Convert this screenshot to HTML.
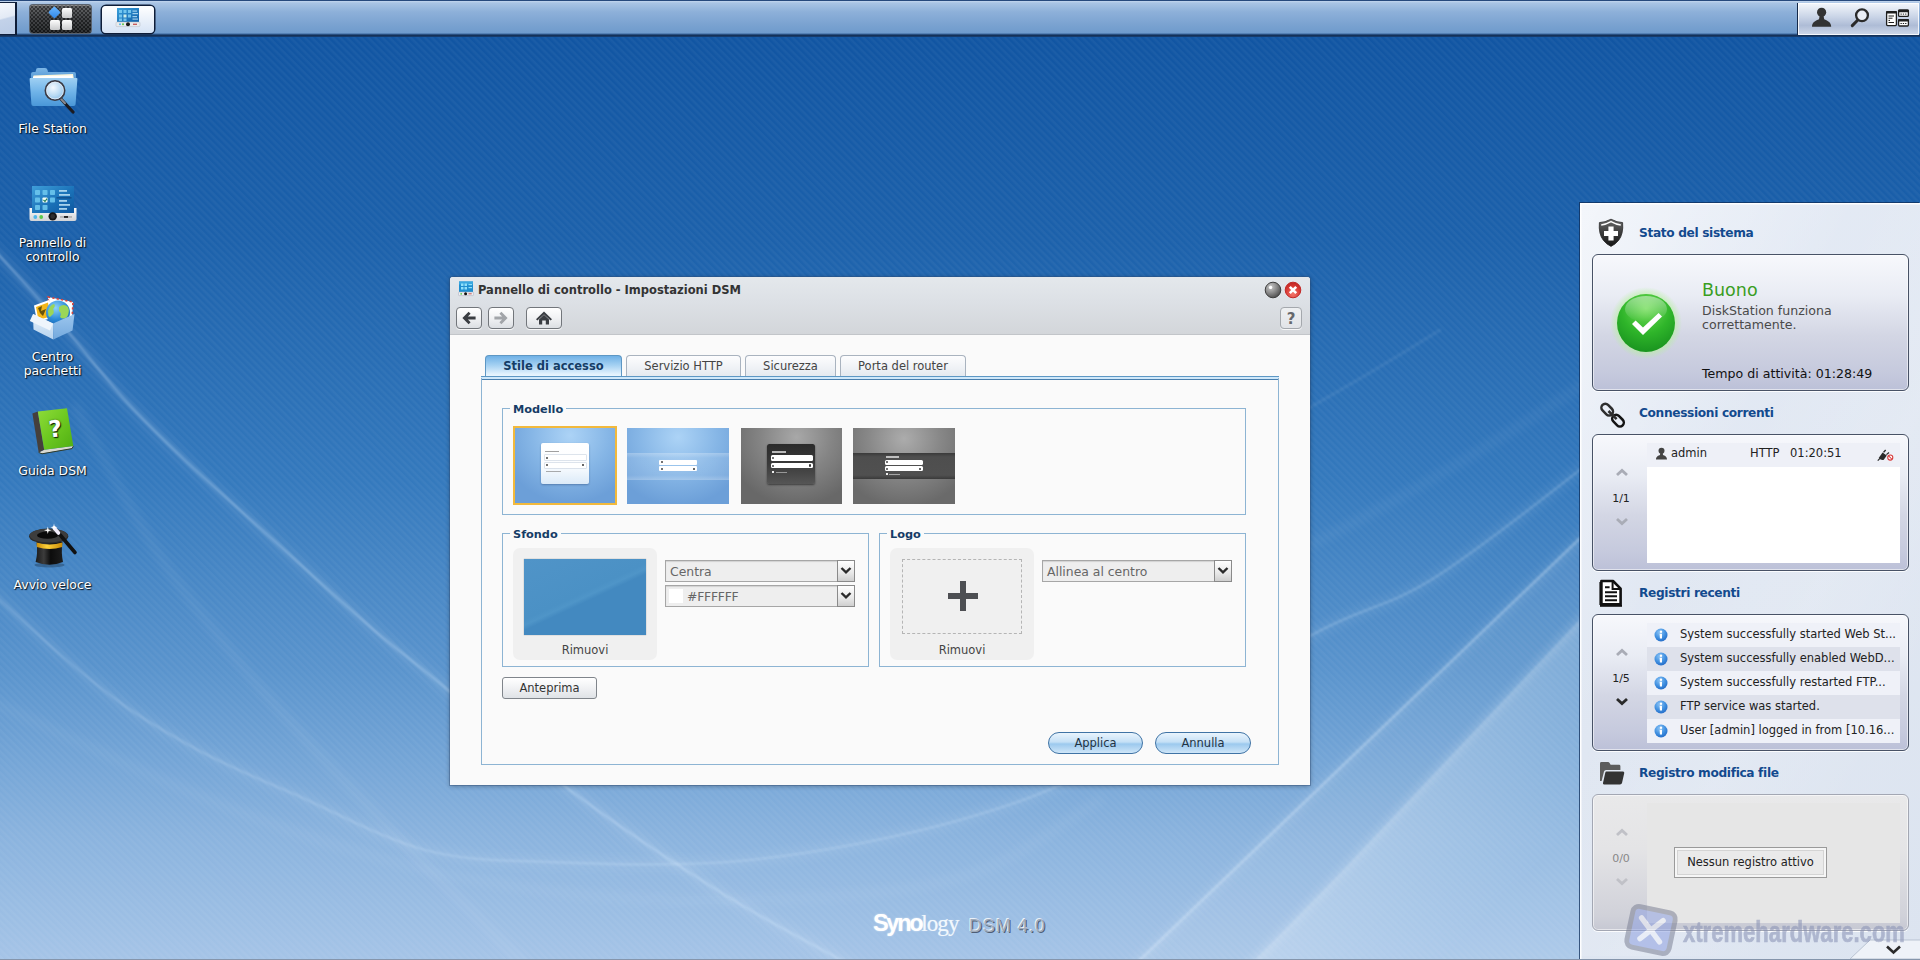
<!DOCTYPE html>
<html lang="it">
<head>
<meta charset="utf-8">
<title>Synology DSM 4.0</title>
<style>
html,body{margin:0;padding:0;}
body{width:1920px;height:960px;overflow:hidden;position:relative;font-family:"DejaVu Sans","Liberation Sans",sans-serif;font-size:11px;color:#333;background:#2f78bd;}
.abs{position:absolute;}
#bg{position:absolute;left:0;top:0;width:1920px;height:960px;}
/* ---------- taskbar ---------- */
#taskbar{position:absolute;left:0;top:0;width:1920px;height:37px;background:linear-gradient(#27497c 0,#27497c 1px,#c3d6ee 1px,#a9c4e4 3px,#8db0d9 12px,#7ba3d1 24px,#6f9bcc 33px,#3a679f 34px,#17365f 35px,#102c52 36px,#1c4a86 37px);}
#tb-left{left:0;top:2px;width:17px;height:33px;border:1px solid #10203c;border-right:2px solid #0e1c36;border-left:none;background:linear-gradient(165deg,#f4f7fc,#e3eaf5 45%,#c3d2e9 50%,#b9cbe6);box-sizing:border-box;}
#tb-menu{left:29.5px;top:5px;width:61.5px;height:28px;border-radius:3px;background:#2b2d30;box-shadow:0 0 0 1px #59626e, inset 0 1px 0 #888;background-image:linear-gradient(rgba(255,255,255,.22),rgba(255,255,255,.05) 50%,rgba(0,0,0,.25));}
#tb-app{left:102px;top:5.5px;width:52px;height:27px;border-radius:4px;background:linear-gradient(#ffffff,#e6eef9 60%,#d6e3f5);box-shadow:0 0 0 1.5px #0e1d38;}
#tray{left:1797px;top:3px;width:122px;height:32px;background:linear-gradient(#f4f7fc,#c8d3e6 45%,#aebcd6 70%,#cfd9ea);border-left:1px solid #14294a;box-sizing:border-box;box-shadow:inset 0 0 0 1px rgba(255,255,255,.8);}
/* ---------- desktop icons ---------- */
.dicon{position:absolute;left:0;width:105px;text-align:center;color:#fff;font-size:12.4px;line-height:14px;text-shadow:1px 1px 1px rgba(0,0,0,.85),0 0 2px rgba(0,0,0,.5);}
.dicon svg{display:block;margin:0 auto;position:relative;left:1.5px;}
.dicon span{display:block;margin-top:8px;}
/* ---------- window ---------- */
#win{left:450px;top:277px;width:860px;height:508px;background:#fafafa;box-shadow:0 0 0 1px rgba(50,80,120,.38),0 1px 5px rgba(0,0,0,.32);border-radius:3px 3px 0 0;}
#winhead{left:0;top:0;width:860px;height:57px;background:linear-gradient(#e4e8ec,#dde1e6 40%,#d3d6da);border-bottom:1px solid #c2c5c9;border-radius:3px 3px 0 0;}
#wintitle{left:28px;top:6px;font-weight:bold;font-size:11.5px;color:#333;white-space:nowrap;line-height:15px;}
.tbtn{position:absolute;top:30px;height:22px;border:1px solid #72767b;border-radius:4px;background:linear-gradient(#ffffff,#f1f2f4 50%,#dcdfe3);box-sizing:border-box;box-shadow:0 1px 0 rgba(255,255,255,.8);}
/* tabs */
.tab{position:absolute;top:79px;height:22px;box-sizing:border-box;border:1px solid #a9b3bf;border-bottom:none;border-radius:4px 4px 0 0;background:linear-gradient(#fdfdfe,#eef1f5 60%,#e3e8ee);font-size:11.5px;line-height:21px;text-align:center;color:#444;white-space:nowrap;}
.tab.act{top:79px;height:23px;border-color:#5d97c4;background:linear-gradient(#6fb1e6,#a9d3f3 45%,#dff0fc 80%,#f4fafe);font-weight:bold;color:#153d66;line-height:21px;}
#tabline{left:31px;top:100px;width:798px;height:4px;box-sizing:border-box;border-top:1px solid #5d97c4;border-bottom:1px solid #4a7fae;background:#cfe8fa;}
#tabpanel{left:31px;top:102px;width:798px;height:387px;box-sizing:border-box;border:1px solid #8db4d3;border-top:none;}
fieldset{position:absolute;margin:0;padding:0;border:1px solid #8db4d3;box-sizing:border-box;}
.legend{position:absolute;top:-6px;left:7px;padding:0 3px;background:#fafafa;font-weight:bold;font-size:11.3px;color:#153d66;line-height:14px;white-space:nowrap;}
.thumb{position:absolute;top:151px;width:102px;height:77px;overflow:hidden;}
.pbox{position:absolute;width:144px;height:112px;background:#f0f0f0;border-radius:7px;}
.pbox .lbl{position:absolute;left:0;width:144px;top:94.5px;text-align:center;font-size:11.5px;color:#444;line-height:14px;}
.combo{position:absolute;height:22px;width:190px;box-sizing:border-box;border:1px solid #a6a6a6;background:#eeeeee;box-shadow:inset 0 1px 1px rgba(0,0,0,.12);font-size:12.4px;line-height:22px;color:#666;padding-left:4px;white-space:nowrap;}
.combo .arr{position:absolute;right:-1px;top:-1px;width:18px;height:22px;box-sizing:border-box;border:1px solid #8a8a8a;background:linear-gradient(#ffffff,#e8e8e8 60%,#cfcfcf);}
.btn{position:absolute;height:22px;box-sizing:border-box;border:1px solid #80858b;border-radius:3px;background:linear-gradient(#ffffff,#f2f3f5 45%,#dfe2e6);font-size:11.5px;line-height:20px;text-align:center;color:#333;}
.pbtn{position:absolute;height:22px;width:95px;box-sizing:border-box;border:1px solid #3f73a5;border-radius:11px;background:linear-gradient(#e9f4fd,#c5e0f6 45%,#9cc9ee 55%,#cfe6f8);font-size:11.5px;line-height:20px;text-align:center;color:#234;}
/* ---------- right panel ---------- */
#side{left:1580px;top:203px;width:340px;height:757px;background:linear-gradient(135deg,#e6ecf6,#e0e7f2 50%,#dce4f0);box-shadow:-1px -1px 0 rgba(15,45,90,.75), inset 1.5px 1.5px 0 rgba(255,255,255,.95);box-sizing:border-box;}
.sh{position:absolute;left:59px;font-weight:bold;font-size:12.2px;letter-spacing:-0.35px;color:#134a8e;line-height:16px;white-space:nowrap;}
.sbox{position:absolute;left:12px;width:317px;height:137px;box-sizing:border-box;border:1px solid #485266;border-radius:6px;background:linear-gradient(#f7f8fc,#e9ecf4 30%,#d3d6e4 60%,#c5c9dd 88%,#bcc1d8);box-shadow:inset 0 0 0 1px rgba(255,255,255,.55),0 1px 0 rgba(255,255,255,.85);}
.pager{position:absolute;left:0;width:56px;text-align:center;font-size:11px;color:#222;}
.list{position:absolute;left:54px;top:10px;width:253px;height:120px;background:#fff;}
.row{position:absolute;left:0;width:253px;height:24px;font-size:11.5px;line-height:22px;color:#222;white-space:nowrap;}
</style>
</head>
<body>
<svg id="bg" width="1920" height="960" viewBox="0 0 1920 960">
<defs>
<linearGradient id="bgg" x1="0" y1="0" x2="0" y2="1">
<stop offset="0" stop-color="#0f53a1"/>
<stop offset="0.25" stop-color="#1c61ab"/>
<stop offset="0.5" stop-color="#3479bd"/>
<stop offset="0.7" stop-color="#5a94cd"/>
<stop offset="0.87" stop-color="#8ab3de"/>
<stop offset="1" stop-color="#a5c4e7"/>
</linearGradient>
<pattern id="stripes" width="5" height="5" patternUnits="userSpaceOnUse" patternTransform="rotate(45)">
<rect width="5" height="2.5" fill="#fff" opacity="0.04"/>
</pattern>
<linearGradient id="wedge" gradientUnits="userSpaceOnUse" x1="1400" y1="760" x2="1520" y2="880"><stop offset="0" stop-color="#fff" stop-opacity=".30"/><stop offset="1" stop-color="#eaf6ff" stop-opacity=".12"/></linearGradient>
<filter id="bl2"><feGaussianBlur stdDeviation="1.2"/></filter>
<filter id="bl6"><feGaussianBlur stdDeviation="5"/></filter>
<filter id="bl20"><feGaussianBlur stdDeviation="18"/></filter>
</defs>
<rect width="1920" height="960" fill="url(#bgg)"/>
<rect width="1920" height="960" fill="url(#stripes)"/>
<g fill="none" stroke-linecap="round">
<path d="M1124 975 L1340 768 L1600 519 L1600 598 L1340 873 L1240 975 Z" fill="#fff" opacity="0.07" filter="url(#bl2)"/>
<path d="M1240 975 L1340 873 L1600 598 L1600 975 Z" fill="url(#wedge)" filter="url(#bl2)"/>
<path d="M-12 243 C-10 245 -12 242 0 256 C12 270 41 301 62 325 C83 349 104 377 125 400 C146 423 166 442 187 462 C208 482 229 500 250 519 C271 538 291 556 312 575 C333 594 354 613 375 631 C396 649 404 654 437 681 C470 708 522 754 570 790 C618 826 677 865 725 895 C773 925 838 958 860 970" stroke="#fff" stroke-width="12" opacity="0.07" filter="url(#bl6)"/>
<path d="M-12 243 C-10 245 -12 242 0 256 C12 270 41 301 62 325 C83 349 104 377 125 400 C146 423 166 442 187 462 C208 482 229 500 250 519 C271 538 291 556 312 575 C333 594 354 613 375 631 C396 649 404 654 437 681 C470 708 522 754 570 790 C618 826 677 865 725 895 C773 925 838 958 860 970" stroke="#d8ecff" stroke-width="2.6" opacity="0.30" filter="url(#bl2)"/>
<path d="M-12 590 C-10 592 -12 589 0 600 C12 611 41 638 62 656 C83 674 104 691 125 706 C146 721 166 732 187 744 C208 756 232 767 250 775 C268 783 265 782 294 794 C323 806 382 839 425 850 C468 861 496 860 550 862 C604 864 682 867 750 860 C818 853 900 837 960 820 C1020 803 1052 791 1110 760 C1168 729 1256 666 1310 636 C1364 606 1384 609 1431 580 C1478 551 1564 482 1590 462" stroke="#fff" stroke-width="12" opacity="0.06" filter="url(#bl6)"/>
<path d="M-12 590 C-10 592 -12 589 0 600 C12 611 41 638 62 656 C83 674 104 691 125 706 C146 721 166 732 187 744 C208 756 232 767 250 775 C268 783 265 782 294 794 C323 806 382 839 425 850 C468 861 496 860 550 862 C604 864 682 867 750 860 C818 853 900 837 960 820 C1020 803 1052 791 1110 760 C1168 729 1256 666 1310 636 C1364 606 1384 609 1431 580 C1478 551 1564 482 1590 462" stroke="#e4f2ff" stroke-width="2.2" opacity="0.20" filter="url(#bl2)"/>
<path d="M75 406 C88 430 132 512 156 550 C180 588 198 610 219 637 C240 664 259 687 281 712 C303 737 325 761 350 787 C375 813 400 840 430 870 C460 900 513 953 530 970" stroke="#fff" stroke-width="5" opacity="0.10" filter="url(#bl6)"/>
<path d="M-10 700 C200 800 400 900 700 900 S1000 860 1100 800" stroke="#fff" stroke-width="8" opacity="0.05" filter="url(#bl6)"/>
<path d="M1124 975 L1340 768 L1600 519" stroke="#fff" stroke-width="10" opacity="0.08" filter="url(#bl6)"/>
<path d="M1124 975 L1340 768 L1600 519" stroke="#e8f4ff" stroke-width="2.6" opacity="0.30" filter="url(#bl2)"/>
<path d="M1240 975 L1340 873 L1600 598" stroke="#fff" stroke-width="5" opacity="0.22" filter="url(#bl6)"/>
<path d="M1300 413 C1350 385 1400 355 1440 330" stroke="#fff" stroke-width="3" opacity="0.07" filter="url(#bl2)"/>
<path d="M1310 545 C1400 500 1500 440 1590 380" stroke="#fff" stroke-width="8" opacity="0.05" filter="url(#bl6)"/>
</g>
</svg>

<div id="taskbar">
<div class="abs" id="tb-left"></div>
<div class="abs" id="tb-menu">
<svg class="abs" style="left:-1px;top:-1.5px" width="62" height="29" viewBox="0 0 62 29">
<defs>
<pattern id="chk" width="4" height="4" patternUnits="userSpaceOnUse"><rect width="2" height="2" fill="#000" opacity=".35"/><rect x="2" y="2" width="2" height="2" fill="#000" opacity=".35"/><rect x="2" width="2" height="2" fill="#fff" opacity=".07"/><rect y="2" width="2" height="2" fill="#fff" opacity=".07"/></pattern>
<linearGradient id="wsq" x1="0" y1="0" x2="0" y2="1"><stop offset="0" stop-color="#fdfdfd"/><stop offset="1" stop-color="#c9cacc"/></linearGradient>
<linearGradient id="bsq" x1="0" y1="0" x2="1" y2="1"><stop offset="0" stop-color="#6db8ff"/><stop offset="1" stop-color="#2e86e8"/></linearGradient>
</defs>
<rect x="1" y="1.5" width="61.5" height="28" rx="3" fill="url(#chk)"/>
<rect x="21" y="4" width="8.8" height="8.8" rx="1.2" fill="url(#bsq)" transform="rotate(45 25.4 8.4)"/>
<rect x="33" y="4" width="10" height="10" rx="1.5" fill="url(#wsq)"/>
<rect x="21" y="16" width="10" height="10" rx="1.5" fill="url(#wsq)"/>
<rect x="33" y="16" width="10" height="10" rx="1.5" fill="url(#wsq)"/>
</svg>
</div>
<div class="abs" id="tb-app">
<svg class="abs" style="left:12.6px;top:1.8px" width="26" height="22" viewBox="0 0 26 22">
<defs><linearGradient id="scr" x1="0" y1="0" x2="1" y2="1"><stop offset="0" stop-color="#3aa0dc"/><stop offset="1" stop-color="#0f5fa8"/></linearGradient></defs>
<rect x="2" y="1" width="22" height="14.5" fill="url(#scr)"/>
<g fill="#7fd0f5" opacity=".85"><rect x="4" y="3" width="3" height="3"/><rect x="8.5" y="3" width="3" height="3"/><rect x="13" y="3" width="3" height="3"/><rect x="4" y="7.5" width="3" height="3"/><rect x="8.5" y="7.5" width="3" height="3" fill="#e8fff0"/><rect x="13" y="7.5" width="3" height="3"/><rect x="4" y="11.5" width="3" height="2.5"/><rect x="8.5" y="11.5" width="3" height="2.5"/></g>
<g fill="#bfe6fa" opacity=".8"><rect x="17.5" y="3.5" width="4.5" height="1.2"/><rect x="17.5" y="6" width="5.5" height="1.2"/><rect x="17.5" y="9" width="4.5" height="1.2"/><rect x="17.5" y="11.5" width="5.5" height="1.2"/></g>
<rect x="1" y="15" width="24" height="4.6" rx="1" fill="#e9eaec" stroke="#b5b9c0" stroke-width=".5"/>
<circle cx="5" cy="17.3" r="1" fill="#55b8e8"/><circle cx="8" cy="17.3" r="1" fill="#5bc84a"/>
<circle cx="13" cy="17.2" r="2" fill="#1b1b1b"/><rect x="18" y="16.7" width="4" height="1.1" fill="#c03a3a"/>
</svg>
</div>
<div class="abs" id="tray">
<svg class="abs" style="left:0;top:0" width="117" height="29" viewBox="1798 4 117 29">
<g fill="#333">
<circle cx="1821.6" cy="13.3" r="4.6"/>
<path d="M1812 27.8 C1812 23 1816 21.5 1819 20.3 L1819.6 17 L1823.6 17 L1824.2 20.3 C1827 21.5 1831.2 23 1831.2 27.8 Z"/>
</g>
<circle cx="1862" cy="16.3" r="5.9" fill="#e9edf5" stroke="#2a2a2a" stroke-width="2.3"/>
<path d="M1857.6 21.2 L1852.3 26.6" stroke="#2a2a2a" stroke-width="3" stroke-linecap="round"/>
<g stroke="#1e1e1e" stroke-width="1.3" fill="#fff">
<rect x="1886.6" y="12.6" width="9.8" height="14" rx="1"/>
<rect x="1898.6" y="11.2" width="9.8" height="6.2" rx="1"/>
<rect x="1898.6" y="20.6" width="9.8" height="6.4" rx="1"/>
</g>
<g fill="#1e1e1e"><rect x="1886" y="12" width="11" height="2.6" rx="1"/><rect x="1898" y="10.6" width="11" height="2.6" rx="1"/><rect x="1898" y="20" width="11" height="2.6" rx="1"/>
<rect x="1888.5" y="16.5" width="5.5" height="1"/><rect x="1888.5" y="18.7" width="4" height="1"/><rect x="1888.5" y="20.9" width="1.5" height="1"/><rect x="1888.5" y="23" width="5.5" height="1"/>
<rect x="1900.5" y="14.6" width="1.3" height="1"/><rect x="1902.8" y="14.6" width="1.3" height="1"/><rect x="1905.1" y="14.6" width="1.3" height="1"/>
<rect x="1900.5" y="24" width="1.3" height="1"/><rect x="1902.8" y="24" width="1.3" height="1"/><rect x="1905.1" y="24" width="1.3" height="1"/>
</g>
</svg>
</div>
</div>

<div class="dicon" style="top:66px"><svg width="52" height="48" viewBox="0 0 52 48">
<defs>
<linearGradient id="fo1" x1="0" y1="0" x2="0" y2="1"><stop offset="0" stop-color="#9fd0f3"/><stop offset=".5" stop-color="#6fb3e8"/><stop offset="1" stop-color="#4a97d8"/></linearGradient>
<linearGradient id="fo2" x1="0" y1="0" x2="0" y2="1"><stop offset="0" stop-color="#7db6e6"/><stop offset="1" stop-color="#4f95d2"/></linearGradient>
<radialGradient id="lens" cx=".4" cy=".35" r=".7"><stop offset="0" stop-color="#f4faff"/><stop offset=".6" stop-color="#b9daf3"/><stop offset="1" stop-color="#86bce6"/></radialGradient>
</defs>
<path d="M8 4 Q8 2 10 2 L17 2 Q19 2 19.5 4 L20 6 L46 6 Q48 6 48 8 L48 14 L3 14 L3 8 Q3 6 5 6 L7.5 6 Z" fill="url(#fo2)"/>
<path d="M5.5 9.5 L45 8 L46 14 L5 14 Z" fill="#fdf6d8"/>
<path d="M5 10.5 L44 9.5 L45 14 L5 14 Z" fill="#fff"/>
<path d="M2.5 12 Q1.5 12 1.6 13 L3.4 38 Q3.5 40 5.5 40 L45.5 40 Q47.5 40 47.6 38 L49.4 13 Q49.5 12 48.5 12 Z" fill="url(#fo1)"/>
<path d="M33 33 L45 46" stroke="#1b1b22" stroke-width="3.2" stroke-linecap="round"/>
<path d="M33 33 L37 37.3" stroke="#8a8a90" stroke-width="2" stroke-linecap="round"/>
<circle cx="27" cy="24.5" r="9.6" fill="url(#lens)" stroke="#3a3a44" stroke-width="1.8"/>
<circle cx="27" cy="24.5" r="8.4" fill="none" stroke="#e8eef5" stroke-width=".9" opacity=".9"/>
</svg><span>File Station</span></div>
<div class="dicon" style="top:180px"><svg width="52" height="48" viewBox="0 0 52 48">
<defs>
<linearGradient id="cps" x1="0" y1="0" x2="1" y2="1"><stop offset="0" stop-color="#3f9fda"/><stop offset=".55" stop-color="#1b72b8"/><stop offset="1" stop-color="#0d57a0"/></linearGradient>
<linearGradient id="cpb" x1="0" y1="0" x2="0" y2="1"><stop offset="0" stop-color="#fbfbfb"/><stop offset="1" stop-color="#d2d3d6"/></linearGradient>
</defs>
<rect x="4" y="6" width="42" height="27" fill="url(#cps)"/>
<g fill="#6cc6ee" opacity=".9"><rect x="7" y="10" width="5" height="5" rx=".8"/><rect x="14.5" y="10" width="5" height="5" rx=".8"/><rect x="22" y="10" width="5" height="5" rx=".8"/><rect x="7" y="17.5" width="5" height="5" rx=".8"/><rect x="22" y="17.5" width="5" height="5" rx=".8"/><rect x="7" y="25" width="5" height="5" rx=".8"/><rect x="14.5" y="25" width="5" height="5" rx=".8"/></g>
<rect x="14.5" y="17.5" width="5" height="5" rx=".8" fill="#f4fff8"/><path d="M15.5 20 L17 21.5 L19 18.6" stroke="#1e7a50" stroke-width="1.1" fill="none"/>
<g fill="#bfe4f8" opacity=".85"><rect x="31" y="10" width="8" height="1.8"/><rect x="31" y="14" width="11" height="1.8"/><rect x="31" y="20" width="8" height="1.8"/><rect x="31" y="24" width="11" height="1.8"/><rect x="31" y="28" width="8" height="1.8"/></g>
<rect x="28.5" y="17" width="15" height="1.6" fill="#0b3f7c" opacity=".6"/>
<path d="M1.5 28 L4 28 L4 33 L46 33 L46 28 L48.5 28 L48.5 39 Q48.5 41 46.5 41 L3.5 41 Q1.5 41 1.5 39 Z" fill="url(#cpb)"/>
<circle cx="7.3" cy="37" r="1.9" fill="#4fb6ea"/><circle cx="13.2" cy="37" r="1.9" fill="#5bc94a"/>
<circle cx="24.7" cy="36.4" r="4.2" fill="#151515"/><circle cx="24.7" cy="36.4" r="2.3" fill="#2e2e2e"/>
<rect x="32" y="36.2" width="12" height="1.5" fill="#aaa"/><rect x="36" y="36" width="4" height="1.9" fill="#222"/>
</svg><span>Pannello di<br>controllo</span></div>
<div class="dicon" style="top:294px"><svg width="52" height="48" viewBox="0 0 52 48">
<defs>
<linearGradient id="bxl" x1="0" y1="0" x2="0" y2="1"><stop offset="0" stop-color="#e4f0fb"/><stop offset="1" stop-color="#b7d3ee"/></linearGradient>
<linearGradient id="bxr" x1="0" y1="0" x2="0" y2="1"><stop offset="0" stop-color="#9cc6ee"/><stop offset="1" stop-color="#74a9dd"/></linearGradient>
<radialGradient id="glb" cx=".4" cy=".3" r=".8"><stop offset="0" stop-color="#8fd4f8"/><stop offset=".6" stop-color="#2b8ad8"/><stop offset="1" stop-color="#1563b0"/></radialGradient>
</defs>
<path d="M20 3 L45 8 L44 25 L22 22 Z" fill="#fff" stroke="#d8433b" stroke-width="1.6" stroke-dasharray="2.2 2.2"/>
<path d="M6 11.5 L21 6 L24 24 L9 28 Z" fill="#fff"/>
<path d="M8 13 L20 8.6 L22.4 22.6 L10.4 26 Z" fill="#f4b619"/>
<path d="M10 14 L14 12 L13 17 L18 15 L15 22 L12 19 Z" fill="#3a3208" opacity=".75"/>
<circle cx="30" cy="18.6" r="12" fill="url(#glb)"/>
<g transform="translate(0 1.1)"><path d="M20 16 Q22 10 26 9 Q28 11 25 14 Q27 18 24 20 Q22 23 20.5 21 Z" fill="#9bd657"/>
<path d="M31 12 Q36 8 40 12 Q42 17 39 22 Q35 25 32 22 Q34 18 31 16 Z" fill="#9bd657"/></g>
<path d="M5 20 L25 29.5 L25.3 45.5 L5.5 35.5 Z" fill="url(#bxl)"/>
<path d="M25 29.5 L46.5 20 L44.5 36.5 L25.3 45.5 Z" fill="url(#bxr)"/>
<path d="M5 20 L1.8 27 L22 36.5 L25 29.5 Z" fill="#eef5fc"/>
</svg><span>Centro<br>pacchetti</span></div>
<div class="dicon" style="top:408px"><svg width="52" height="48" viewBox="0 0 52 48">
<defs>
<linearGradient id="bkg" x1="0" y1="0" x2="1" y2="1"><stop offset="0" stop-color="#8fdc3a"/><stop offset=".5" stop-color="#6cc820"/><stop offset="1" stop-color="#4fae12"/></linearGradient>
</defs>
<path d="M10.7 44.4 L16.2 41.8 L45.3 38 L43.8 40.4 L14 45.6 Z" fill="#d9d9d2"/>
<path d="M10.7 44.4 L14 45.8 L44 40.6 L45.3 38.2" fill="none" stroke="#2f3a28" stroke-width="1"/>
<path d="M4.4 5.6 L9.8 3.6 L16.2 41.8 L10.7 44.4 Z" fill="#453f3c"/>
<path d="M9.8 3.6 L39 0.2 L45.3 38 L16.2 41.8 Z" fill="url(#bkg)"/>
<text x="27.3" y="29" font-family="'DejaVu Sans','Liberation Sans',sans-serif" font-weight="bold" font-size="23" fill="#fff" text-anchor="middle" transform="rotate(-6 27 21)">?</text>
</svg><span>Guida DSM</span></div>
<div class="dicon" style="top:522px"><svg width="52" height="48" viewBox="0 0 52 48">
<defs>
<linearGradient id="hatb" x1="0" y1="0" x2="1" y2="0"><stop offset="0" stop-color="#1a1a1a"/><stop offset=".3" stop-color="#3c3c3c"/><stop offset=".55" stop-color="#0c0c0c"/><stop offset="1" stop-color="#1d1d1d"/></linearGradient>
<linearGradient id="hatg" x1="0" y1="0" x2="1" y2="0"><stop offset="0" stop-color="#c88a08"/><stop offset=".4" stop-color="#ffd23a"/><stop offset="1" stop-color="#c88a08"/></linearGradient>
</defs>
<ellipse cx="21.5" cy="43" rx="15" ry="2.5" fill="#000" opacity=".25"/>
<path d="M8.6 20 L34.4 20 Q33 31 35 40 Q21.5 45.5 7.6 40 Q10 31 8.6 20 Z" fill="url(#hatb)"/>
<path d="M8.6 20.6 Q21.5 24.5 34.4 20.6 L34.2 25 Q21.5 29 8.8 25 Z" fill="url(#hatg)"/>
<ellipse cx="20.7" cy="14.2" rx="19.6" ry="7.6" fill="#2b2b2b"/>
<ellipse cx="20.7" cy="13.6" rx="19" ry="6.8" fill="#3d3d3d"/>
<ellipse cx="19.5" cy="13.2" rx="10.5" ry="3.6" fill="#0a0a0a"/>
<path d="M27.5 7.5 L47 30.5" stroke="#111" stroke-width="3.6" stroke-linecap="round"/>
<path d="M26.2 6 L30.5 11" stroke="#f3eefc" stroke-width="3.6" stroke-linecap="round"/>
<path d="M19.8 4.5 L20.6 7.4 L23.5 8.2 L20.6 9 L19.8 12 L19 9 L16 8.2 L19 7.4 Z" fill="#fff"/>
<path d="M26 1.6 L26.7 4.6 L29.6 5.3 L26.7 6 L26 9 L25.3 6 L22.4 5.3 L25.3 4.6 Z" fill="#fff"/>
</svg><span>Avvio veloce</span></div>

<div class="abs" id="win">
<div class="abs" id="winhead">
<div class="abs" id="wintitle">Pannello di controllo - Impostazioni DSM</div>
<svg class="abs" style="left:8px;top:4px" width="16" height="16" viewBox="0 0 16 16">
<rect x="1" y="0.5" width="14" height="10.5" fill="#1f8fd0"/><rect x="1" y="0.5" width="14" height="3" fill="#3aa8e0"/>
<g fill="#8fe0fa"><rect x="3" y="2.5" width="2.5" height="2.5"/><rect x="6.5" y="2.5" width="2.5" height="2.5"/><rect x="3" y="6" width="2.5" height="2.5"/><rect x="6.5" y="6" width="2.5" height="2.5"/><rect x="10.5" y="3" width="3.5" height="1.2"/><rect x="10.5" y="6" width="3.5" height="1.2"/></g>
<rect x="0.5" y="11" width="15" height="3.6" rx=".8" fill="#eceef0" stroke="#aab" stroke-width=".5"/>
<circle cx="3.2" cy="12.8" r=".9" fill="#5bc84a"/><circle cx="7.6" cy="12.7" r="1.5" fill="#111"/><rect x="10.5" y="12.3" width="3.2" height="1" fill="#c55"/>
</svg>
<svg class="abs" style="left:812px;top:3px" width="42" height="20" viewBox="0 0 42 20">
<defs>
<radialGradient id="gball" cx=".35" cy=".3" r=".75"><stop offset="0" stop-color="#c9c9c9"/><stop offset=".5" stop-color="#8e8e8e"/><stop offset="1" stop-color="#4b4b4b"/></radialGradient>
<radialGradient id="rball" cx=".5" cy=".75" r=".8"><stop offset="0" stop-color="#f2756a"/><stop offset=".6" stop-color="#d93a34"/><stop offset="1" stop-color="#b8201f"/></radialGradient>
</defs>
<circle cx="11" cy="10" r="7.8" fill="url(#gball)" stroke="#3e3e3e" stroke-width="1"/>
<circle cx="8.6" cy="7.4" r="1.7" fill="#fff"/>
<circle cx="31" cy="10" r="7.8" fill="url(#rball)" stroke="#c22a28" stroke-width="1"/>
<path d="M27.8 6.8 L34.2 13.2 M34.2 6.8 L27.8 13.2" stroke="#fff" stroke-width="2.6"/>
</svg>
<div class="tbtn" style="left:6px;width:26px"><svg class="abs" style="left:0;top:0" width="24" height="20" viewBox="0 0 24 20"><path d="M5.4 10 L11.6 3.8 L13.6 5.8 L10.9 8.6 L18.6 8.6 L18.6 11.4 L10.9 11.4 L13.6 14.2 L11.6 16.2 Z" fill="#3a3d42"/></svg></div>
<div class="tbtn" style="left:38px;width:26px"><svg class="abs" style="left:0;top:0" width="24" height="20" viewBox="0 0 24 20"><path d="M18.6 10 L12.4 3.8 L10.4 5.8 L13.1 8.6 L5.4 8.6 L5.4 11.4 L13.1 11.4 L10.4 14.2 L12.4 16.2 Z" fill="#a2a5a9"/></svg></div>
<div class="tbtn" style="left:76px;width:36px"><svg class="abs" style="left:0;top:0" width="34" height="20" viewBox="0 0 34 20"><path d="M17 3.6 L25 11.2 L23.6 12.6 L17 6.4 L10.4 12.6 L9 11.2 Z" fill="#3a3d42"/><path d="M12 11.4 L17 6.8 L22 11.4 L22 16.4 L18.8 16.4 L18.8 12.4 L15.2 12.4 L15.2 16.4 L12 16.4 Z" fill="#3a3d42"/></svg></div>
<div class="tbtn" style="left:830px;width:22px;border-color:#a4a8ad;background:linear-gradient(#eef0f2,#e2e4e8)"><div class="abs" style="left:0;top:2px;width:20px;text-align:center;font-weight:bold;font-size:15px;line-height:18px;color:#66686c">?</div></div>
</div>
<div class="abs" style="left:0;top:-1px">
<div class="tab act" style="left:35px;width:137px">Stile di accesso</div>
<div class="tab" style="left:176px;width:115px">Servizio HTTP</div>
<div class="tab" style="left:295px;width:91px">Sicurezza</div>
<div class="tab" style="left:390px;width:126px">Porta del router</div>
<div class="abs" id="tabline"></div>
<div class="abs" id="tabpanel"></div>

<fieldset style="left:52px;top:132px;width:744px;height:107px"><div class="legend">Modello</div></fieldset>

<div class="abs" style="left:63px;top:150px;width:104px;height:79px;box-sizing:border-box;border:2px solid #f2b93c;background:radial-gradient(ellipse 70% 90% at 55% 10%,#acd3f6,#86b6e6 55%,#6c9fd8)">
<div class="abs" style="left:26px;top:15px;width:48px;height:41px;border-radius:2px;background:linear-gradient(#ffffff,#fbfdff 55%,#dbeaf8);box-shadow:0 1px 2px rgba(40,70,120,.45)"></div>
<div class="abs" style="left:30px;top:22.5px;width:14px;height:1.5px;background:#777;opacity:.7"></div>
<div class="abs" style="left:30px;top:27px;width:41px;height:5px;background:#fff;box-shadow:0 0 0 .6px #c9d3df"></div>
<div class="abs" style="left:30px;top:34.5px;width:41px;height:5px;background:#fff;box-shadow:0 0 0 .6px #c9d3df"></div>
<div class="abs" style="left:31px;top:28.5px;width:2px;height:2px;background:#444;border-radius:1px"></div>
<div class="abs" style="left:31px;top:36px;width:2px;height:2px;background:#444;border-radius:1px"></div>
<div class="abs" style="left:67px;top:36px;width:2.4px;height:2.4px;background:#333;border-radius:2px"></div>
<div class="abs" style="left:31px;top:43px;width:15px;height:1.2px;background:#888;opacity:.7"></div>
</div>
<div class="abs" style="left:177px;top:151.5px;width:102px;height:76.5px;background:radial-gradient(ellipse 70% 90% at 50% 12%,#acd3f6,#86b6e6 55%,#6c9fd8)">
<div class="abs" style="left:0;top:25px;width:102px;height:27px;background:linear-gradient(rgba(255,255,255,.28),rgba(255,255,255,.10) 18%,rgba(255,255,255,.10) 82%,rgba(255,255,255,.28))"></div>
<div class="abs" style="left:32px;top:32.2px;width:38px;height:5px;border-radius:1px;background:#fff"></div>
<div class="abs" style="left:32px;top:38.6px;width:38px;height:5px;border-radius:1px;background:#fff"></div>
<div class="abs" style="left:33.5px;top:33.7px;width:2px;height:2px;background:#444;border-radius:1px"></div>
<div class="abs" style="left:33.5px;top:40.1px;width:2px;height:2px;background:#444;border-radius:1px"></div>
<div class="abs" style="left:66px;top:40px;width:2.4px;height:2.4px;background:#333;border-radius:2px"></div>
</div>
<div class="abs" style="left:290.6px;top:151.5px;width:101px;height:76.5px;background:radial-gradient(ellipse 70% 90% at 55% 12%,#a8a8a8,#858585 50%,#686868)">
<div class="abs" style="left:26.5px;top:16px;width:48px;height:40px;border-radius:2.5px;background:linear-gradient(#2b2b2b,#3a3a3a 50%,#565656);box-shadow:0 1px 2px rgba(0,0,0,.5)"></div>
<div class="abs" style="left:31px;top:23.5px;width:14px;height:1.6px;background:#ddd;opacity:.8"></div>
<div class="abs" style="left:30px;top:27.5px;width:42px;height:5.6px;border-radius:1.5px;background:#fff"></div>
<div class="abs" style="left:30px;top:35px;width:42px;height:5.6px;border-radius:1.5px;background:#fff"></div>
<div class="abs" style="left:31.5px;top:29.3px;width:2px;height:2px;background:#444;border-radius:1px"></div>
<div class="abs" style="left:31.5px;top:37px;width:2px;height:2px;background:#444;border-radius:1px"></div>
<div class="abs" style="left:68px;top:36.8px;width:2.4px;height:2.4px;background:#333;border-radius:2px"></div>
<div class="abs" style="left:31.5px;top:43.5px;width:2px;height:2px;background:#eee"></div>
<div class="abs" style="left:35px;top:44px;width:11px;height:1.2px;background:#bbb;opacity:.7"></div>
</div>
<div class="abs" style="left:403px;top:151.5px;width:102px;height:76.5px;background:radial-gradient(ellipse 70% 90% at 50% 14%,#acacac,#888 50%,#6a6a6a)">
<div class="abs" style="left:0;top:25px;width:102px;height:26px;background:linear-gradient(#3a3a3a,#4e4e4e 15%,#505050 85%,#3a3a3a)"></div>
<div class="abs" style="left:33px;top:28.8px;width:13px;height:1.6px;background:#ddd;opacity:.8"></div>
<div class="abs" style="left:31.5px;top:32.2px;width:38px;height:5.2px;border-radius:1.5px;background:#fff"></div>
<div class="abs" style="left:31.5px;top:38.6px;width:38px;height:5.2px;border-radius:1.5px;background:#fff"></div>
<div class="abs" style="left:33px;top:33.8px;width:2px;height:2px;background:#444;border-radius:1px"></div>
<div class="abs" style="left:33px;top:40.3px;width:2px;height:2px;background:#444;border-radius:1px"></div>
<div class="abs" style="left:65.5px;top:40.1px;width:2.4px;height:2.4px;background:#333;border-radius:2px"></div>
<div class="abs" style="left:33px;top:45.7px;width:2px;height:2px;background:#eee"></div>
<div class="abs" style="left:36px;top:46.2px;width:11px;height:1.2px;background:#ccc;opacity:.7"></div>
</div>
<fieldset style="left:52px;top:257px;width:367px;height:134px"><div class="legend">Sfondo</div></fieldset>
<fieldset style="left:429px;top:257px;width:367px;height:134px"><div class="legend">Logo</div></fieldset>

<div class="pbox" style="left:63px;top:272px"><div class="abs" style="left:11px;top:11px;width:122px;height:76px;background:linear-gradient(155deg,#5094c8,#4b91c5 46%,#4f95c8 50%,#4389c0 54%,#4389c0);box-shadow:0 0 1px rgba(0,0,0,.4)"></div><div class="lbl">Rimuovi</div></div>
<div class="pbox" style="left:440px;top:272px"><div class="abs" style="left:12px;top:11px;width:120px;height:75px;box-sizing:border-box;border:1px dashed #b5b5b5"></div><div class="abs" style="left:58px;top:44.7px;width:30px;height:6.6px;background:#4d4f53"></div><div class="abs" style="left:69.7px;top:33px;width:6.6px;height:30px;background:#4d4f53"></div><div class="lbl">Rimuovi</div></div>
<div class="combo" style="left:215px;top:284px">Centra<div class="arr"><svg class="abs" style="left:2px;top:5px" width="12" height="9" viewBox="0 0 12 9"><path d="M1.5 2 L6 6.4 L10.5 2" fill="none" stroke="#2b2b2b" stroke-width="2.4"/></svg></div></div>
<div class="combo" style="left:215px;top:309px"><span class="abs" style="left:3px;top:3px;width:14px;height:14px;background:#fff"></span><span style="margin-left:17px;letter-spacing:-0.25px">#FFFFFF</span><div class="arr"><svg class="abs" style="left:2px;top:5px" width="12" height="9" viewBox="0 0 12 9"><path d="M1.5 2 L6 6.4 L10.5 2" fill="none" stroke="#2b2b2b" stroke-width="2.4"/></svg></div></div>
<div class="combo" style="left:592px;top:284px">Allinea al centro<div class="arr"><svg class="abs" style="left:2px;top:5px" width="12" height="9" viewBox="0 0 12 9"><path d="M1.5 2 L6 6.4 L10.5 2" fill="none" stroke="#2b2b2b" stroke-width="2.4"/></svg></div></div>
<div class="btn" style="left:52px;top:401px;width:95px">Anteprima</div>
<div class="pbtn" style="left:598px;top:456px">Applica</div>
<div class="pbtn" style="left:705px;top:456px;width:96px">Annulla</div>
</div>
</div>

<div class="abs" id="side">
<div class="abs" style="left:0;top:0;width:340px;height:753px;background:linear-gradient(118deg,rgba(255,255,255,.55) 0,rgba(255,255,255,.25) 18%,rgba(255,255,255,0) 38%,rgba(255,255,255,.12) 60%,rgba(255,255,255,0) 80%)"></div>
<!-- header icons -->
<svg class="abs" style="left:16px;top:14px" width="30" height="32" viewBox="0 0 30 32">
<defs><linearGradient id="shd" x1="0" y1="0" x2="0" y2="1"><stop offset="0" stop-color="#6a6a6a"/><stop offset=".5" stop-color="#3c3c3c"/><stop offset="1" stop-color="#141414"/></linearGradient></defs>
<path d="M15 2.2 Q21 5.4 26.6 5.6 Q27.6 17 22.6 23.4 Q19.6 27.2 15 29.4 Q10.4 27.2 7.4 23.4 Q2.4 17 3.4 5.6 Q9 5.4 15 2.2 Z" fill="url(#shd)" stroke="#2a2a2a" stroke-width=".8"/>
<path d="M5.2 8 Q10 7.4 15 4.6 Q20 7.4 24.8 8" fill="none" stroke="#fff" stroke-width="1.3"/>
<path d="M12.4 9.6 L17.6 9.6 L17.6 13.9 L22 13.9 L22 19 L17.6 19 L17.6 23.6 L12.4 23.6 L12.4 19 L8 19 L8 13.9 L12.4 13.9 Z" fill="#fff"/>
</svg>
<svg class="abs" style="left:18px;top:197px" width="30" height="28" viewBox="0 0 30 28">
<g fill="none" stroke="#2e2e2e" stroke-width="2.5">
<rect x="-6.6" y="-3.9" width="13.2" height="7.8" rx="3.9" transform="translate(9.2 9.6) rotate(45)"/>
<rect x="-6.6" y="-3.9" width="13.2" height="7.8" rx="3.9" transform="translate(20 20.6) rotate(45)" stroke="#141414"/>
<path d="M10.5 11 L18.6 19.2" stroke-width="2.6"/>
</g>
</svg>
<svg class="abs" style="left:18px;top:375px" width="28" height="30" viewBox="0 0 28 30">
<path d="M3.4 3 L15 3 L22.6 10.6 L22.6 26.4 L3.4 26.4 Z" fill="#fff" stroke="#111" stroke-width="2.6" stroke-linejoin="round"/>
<path d="M2 27.8 L24 27.8" stroke="#111" stroke-width="2"/><path d="M2.2 4 L2.2 27" stroke="#111" stroke-width="1.6"/>
<path d="M14.6 3.4 L14.6 11 L22.2 11" fill="none" stroke="#111" stroke-width="2"/>
<path d="M7 9.2 L11.6 9.2 M7 14.2 L19 14.2 M7 18.2 L19 18.2 M7 22.2 L19 22.2" stroke="#111" stroke-width="2"/>
</svg>
<svg class="abs" style="left:18px;top:557px" width="28" height="26" viewBox="0 0 28 26">
<path d="M2 3.4 Q2 2 3.4 2 L10 2 Q11 2 11.6 3 L12.6 4.8 L21 4.8 Q22.4 4.8 22.4 6.2 L22.4 10 L8 10 Q6.4 10 6 11.6 L3.6 21 L2 21 Z" fill="#5c5c5c"/>
<path d="M8.4 11.6 L25 11.6 Q26.6 11.6 26.2 13.2 L24 23 Q23.6 24.4 22 24.4 L6 24.4 Q4.6 24.4 5 23 L7.2 13 Q7.5 11.6 8.4 11.6 Z" fill="#333"/>
</svg>

<div class="sh" style="top:22px">Stato del sistema</div>
<div class="sh" style="top:202px">Connessioni correnti</div>
<div class="sh" style="top:382px">Registri recenti</div>
<div class="sh" style="top:562px">Registro modifica file</div>

<div class="sbox" style="top:51px">
<svg class="abs" style="left:14.5px;top:30px" width="76" height="76" viewBox="0 0 76 76">
<defs>
<radialGradient id="gglow" cx=".5" cy=".5" r=".5"><stop offset=".7" stop-color="#b8f0a0" stop-opacity=".9"/><stop offset="1" stop-color="#b8f0a0" stop-opacity="0"/></radialGradient>
<radialGradient id="gbtn" cx=".5" cy=".25" r=".85"><stop offset="0" stop-color="#6fdc55"/><stop offset=".5" stop-color="#2fb52a"/><stop offset="1" stop-color="#138a1c"/></radialGradient>
<linearGradient id="ggl" x1="0" y1="0" x2="0" y2="1"><stop offset="0" stop-color="#fff" stop-opacity=".45"/><stop offset="1" stop-color="#fff" stop-opacity="0"/></linearGradient>
</defs>
<circle cx="38" cy="38" r="36" fill="url(#gglow)"/>
<circle cx="38" cy="38" r="29" fill="url(#gbtn)"/>
<ellipse cx="38" cy="24" rx="21" ry="13" fill="url(#ggl)"/>
<path d="M24 39 L27.6 35.4 L35 42.6 L50.6 28 L54 31.6 L35 50 Z" fill="#fff"/>
</svg>
<div class="abs" style="left:109px;top:24px;font-size:17.5px;line-height:22px;color:#3a9e1f">Buono</div>
<div class="abs" style="left:109px;top:49px;font-size:12.6px;line-height:14px;color:#4a4a4a;white-space:nowrap">DiskStation funziona<br>correttamente.</div>
<div class="abs" style="left:109px;top:112px;font-size:12.6px;line-height:14px;color:#111;white-space:nowrap">Tempo di attività: 01:28:49</div>
</div>

<div class="sbox" style="top:231px">
<svg class="abs" style="left:22px;top:33px" width="14" height="9" viewBox="0 0 14 9"><path d="M2 7 L7 2.4 L12 7" fill="none" stroke="#a9acb6" stroke-width="2.8"/></svg>
<div class="pager" style="top:57px">1/1</div>
<svg class="abs" style="left:22px;top:82px" width="14" height="9" viewBox="0 0 14 9"><path d="M2 2 L7 6.6 L12 2" fill="none" stroke="#a9acb6" stroke-width="2.8"/></svg>
<div class="abs" style="left:54px;top:8px;width:253px;height:24px;background:#eef0f7"></div>
<div class="list" style="top:32px;height:96px"></div>
<svg class="abs" style="left:62px;top:12px" width="13" height="13" viewBox="0 0 13 13"><g fill="#444"><circle cx="6.5" cy="3.8" r="3"/><path d="M1 12.6 C1 9.4 3.6 8.6 5 8 L5.2 6 L7.8 6 L8 8 C9.4 8.6 12 9.4 12 12.6 Z"/></g></svg>
<div class="abs" style="left:78px;top:11px;font-size:11.5px;line-height:15px;color:#222">admin</div>
<div class="abs" style="left:157px;top:11px;font-size:11.5px;line-height:15px;color:#222">HTTP</div>
<div class="abs" style="left:197px;top:11px;font-size:11.5px;line-height:15px;color:#222">01:20:51</div>
<svg class="abs" style="left:283.5px;top:13.5px" width="17" height="12" viewBox="0 0 20 14"><g fill="#2a2a2a"><path d="M2 10.5 L6.5 4 L11.5 7.5 L8 12.5 Q5 13.5 2 10.5 Z"/><path d="M7 3.4 L9.6 0.6 L10.8 1.6 L8.4 4.4 Z M10.6 6 L13.6 3.4 L14.6 4.6 L11.6 7 Z"/><path d="M0.4 13.2 L3 10.4 L4 11.4 L1.4 14 Z"/></g><circle cx="15.6" cy="10" r="3" fill="#fff" stroke="#d83a3a" stroke-width="1.3"/><path d="M13.6 8 L17.6 12" stroke="#d83a3a" stroke-width="1.2"/></svg>
</div>

<div class="sbox" style="top:411px">
<svg class="abs" style="left:22px;top:33px" width="14" height="9" viewBox="0 0 14 9"><path d="M2 7 L7 2.4 L12 7" fill="none" stroke="#a9acb6" stroke-width="2.8"/></svg>
<div class="pager" style="top:57px">1/5</div>
<svg class="abs" style="left:22px;top:82px" width="14" height="9" viewBox="0 0 14 9"><path d="M2 2 L7 6.6 L12 2" fill="none" stroke="#2a2a2a" stroke-width="2.8"/></svg>
<div class="list" style="top:8px;height:120px;background:none">
<div class="row" style="top:0px;background:#eff1f8"><svg class="abs" style="left:7px;top:5px" width="14" height="14" viewBox="0 0 14 14"><defs><radialGradient id="inf" cx=".4" cy=".3" r=".8"><stop offset="0" stop-color="#8cc4f6"/><stop offset=".55" stop-color="#3f8fe0"/><stop offset="1" stop-color="#1d62c0"/></radialGradient></defs><circle cx="7" cy="7" r="6.5" fill="url(#inf)"/><circle cx="7" cy="3.7" r="1.2" fill="#fff"/><path d="M5.6 5.8 L8 5.8 L8 10.6 L5.9 10.6 Z M6 5.8 L6 10.6" fill="#fff"/></svg><span class="abs" style="left:33px;top:0">System successfully started Web St...</span></div>
<div class="row" style="top:24px;background:#dee1eb"><svg class="abs" style="left:7px;top:5px" width="14" height="14" viewBox="0 0 14 14"><circle cx="7" cy="7" r="6.5" fill="url(#inf)"/><circle cx="7" cy="3.7" r="1.2" fill="#fff"/><path d="M5.6 5.8 L8 5.8 L8 10.6 L5.9 10.6 Z M6 5.8 L6 10.6" fill="#fff"/></svg><span class="abs" style="left:33px;top:0">System successfully enabled WebD...</span></div>
<div class="row" style="top:48px;background:#eff1f8"><svg class="abs" style="left:7px;top:5px" width="14" height="14" viewBox="0 0 14 14"><circle cx="7" cy="7" r="6.5" fill="url(#inf)"/><circle cx="7" cy="3.7" r="1.2" fill="#fff"/><path d="M5.6 5.8 L8 5.8 L8 10.6 L5.9 10.6 Z M6 5.8 L6 10.6" fill="#fff"/></svg><span class="abs" style="left:33px;top:0">System successfully restarted FTP...</span></div>
<div class="row" style="top:72px;background:#dee1eb"><svg class="abs" style="left:7px;top:5px" width="14" height="14" viewBox="0 0 14 14"><circle cx="7" cy="7" r="6.5" fill="url(#inf)"/><circle cx="7" cy="3.7" r="1.2" fill="#fff"/><path d="M5.6 5.8 L8 5.8 L8 10.6 L5.9 10.6 Z M6 5.8 L6 10.6" fill="#fff"/></svg><span class="abs" style="left:33px;top:0">FTP service was started.</span></div>
<div class="row" style="top:96px;background:#eff1f8"><svg class="abs" style="left:7px;top:5px" width="14" height="14" viewBox="0 0 14 14"><circle cx="7" cy="7" r="6.5" fill="url(#inf)"/><circle cx="7" cy="3.7" r="1.2" fill="#fff"/><path d="M5.6 5.8 L8 5.8 L8 10.6 L5.9 10.6 Z M6 5.8 L6 10.6" fill="#fff"/></svg><span class="abs" style="left:33px;top:0">User [admin] logged in from [10.16...</span></div>
</div>
</div>

<div class="sbox" style="top:591px;background:linear-gradient(#e9e9ea,#e4e4e6 40%,#d0d1d9 90%,#c6c8d3);border-color:#a3a7b3">
<svg class="abs" style="left:22px;top:33px" width="14" height="9" viewBox="0 0 14 9"><path d="M2 7 L7 2.4 L12 7" fill="none" stroke="#c0c1c7" stroke-width="2.8"/></svg>
<div class="pager" style="top:57px;color:#888">0/0</div>
<svg class="abs" style="left:22px;top:82px" width="14" height="9" viewBox="0 0 14 9"><path d="M2 2 L7 6.6 L12 2" fill="none" stroke="#c0c1c7" stroke-width="2.8"/></svg>
<div class="list" style="top:8px;height:120px;background:#e6e6e6"></div>
<div class="abs" style="left:81px;top:52px;width:153px;height:31px;box-sizing:border-box;border:1px solid #9a9a9a;background:#eaeaea;box-shadow:inset 0 0 0 2px #f6f6f6, inset 0 0 0 3px #d4d4d4;font-size:11.5px;line-height:29px;text-align:center;color:#222;white-space:nowrap">Nessun registro attivo</div>
</div>

<!-- bottom-right corner tab -->
<svg class="abs" style="left:264px;top:734px" width="78" height="22" viewBox="0 0 78 22"><path d="M6 22 L26 3 L78 3 L78 22 Z" fill="#eef2f8" stroke="#b9c3d2" stroke-width="1"/><path d="M43 9.5 L49.5 15.5 L56 9.5" fill="none" stroke="#2a2a2a" stroke-width="2.6"/></svg>

<!-- watermark -->
<svg class="abs" style="left:36px;top:690px" width="304" height="64" viewBox="0 0 304 64" opacity=".55">
<g transform="translate(35 37) rotate(12) scale(.9)"><rect x="-24" y="-23" width="48" height="46" rx="7" fill="#8ea0e0" stroke="#7d8296" stroke-width="5.5"/><path d="M-13 -11 L12 11 M11 -13 L-10 12" stroke="#eef1fb" stroke-width="6" stroke-linecap="round"/></g>
<text x="67" y="49" font-family="'Liberation Sans',sans-serif" font-weight="bold" font-size="29" fill="#8790b4" stroke="#8790b4" stroke-width=".7" textLength="222" lengthAdjust="spacingAndGlyphs">xtremehardware.com</text>
</svg>
</div>

<!-- Synology logo -->
<div class="abs" style="left:873px;top:906.5px;white-space:nowrap;line-height:32px;height:32px">
<span style="font-family:'Liberation Sans',sans-serif;font-weight:bold;font-size:23.5px;letter-spacing:-2.3px;color:#fff;text-shadow:0 0 2px rgba(255,255,255,.6)">Syno</span><span style="font-family:'Liberation Serif',serif;font-size:23px;letter-spacing:-0.9px;color:#f2f8fd;text-shadow:0 0 1px rgba(255,255,255,.5)">logy</span>
<span class="abs" style="left:96px;top:3px;font-family:'Liberation Sans',sans-serif;font-size:18px;letter-spacing:1px;color:#9fabbb;text-shadow:-1px -1px 0 rgba(255,255,255,.8),1px 1px 0 rgba(50,60,80,.75)">DSM 4.0</span>
</div>
<div class="abs" style="left:0;top:958.5px;width:1920px;height:1.5px;background:#8595ab"></div>
</body>
</html>
